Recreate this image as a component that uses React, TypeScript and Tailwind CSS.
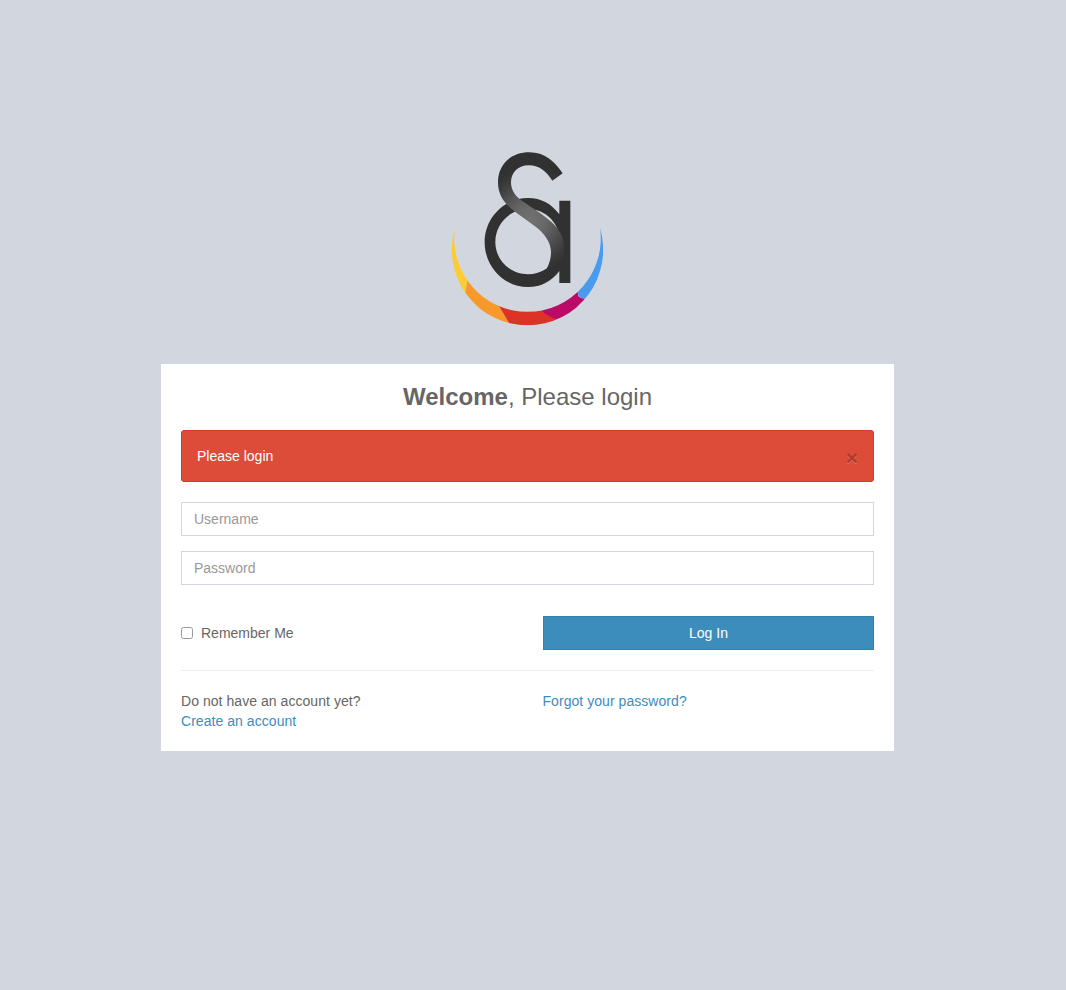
function Logo() {
  return (
    <svg width="180" height="200" viewBox="0 0 540 600" role="img" aria-label="Logo">
      <defs>
        <radialGradient id="sheen" gradientUnits="userSpaceOnUse" cx="272" cy="238" r="158">
          <stop offset="0" stopColor="#717171" />
          <stop offset="0.3" stopColor="#676767" />
          <stop offset="0.6" stopColor="#4e4e4e" />
          <stop offset="0.82" stopColor="#3b3b3b" />
          <stop offset="1" stopColor="#313131" />
        </radialGradient>
        <clipPath id="crescent">
          <path d="M45 264 A227 227 0 1 0 480 264 A219.8 219.8 0 1 1 45 264 Z" />
        </clipPath>
      </defs>
      <g clipPath="url(#crescent)">
        <path d="M0 200H120L83 421L76 457L0 520Z" fill="#fbcc34" />
        <path d="M83 419L76 457L40 600H230L207 549L177 498L150 440Z" fill="#f79a2b" />
        <path d="M177 498L207 549L230 600H400L350 538L303 512L250 480Z" fill="#dd3226" />
        <path d="M303 512Q330 532 350 538L400 600L470 500L435 476L424 474L415 469L413 455L350 470Z" fill="#bb0b67" />
        <path d="M413 455L415 466Q421 476 435 476L540 500V200H440Z" fill="#4a9bef" />
      </g>
      <path
        fillRule="evenodd"
        fill="#313131"
        d="M264 174C304 174 335 192 358 223V182H391V429H358V393C335 424 304 441 264 441C192 441 134 380 134 307C134 234 192 174 264 174ZM264 207C210 207 166 251 166 306C166 360 210 403 264 403C318 403 360 360 360 306C360 251 318 207 264 207Z"
      />
      <path
        fill="url(#sheen)"
        d="M368 100L337 122C320 96 300 76 266 76C235 76 213 98 213 127C213 150 226 170 247 183C280 206 302 219 326 239C344 253 352 264 361 278C378 310 374 345 358 378L320 387C330 367 333 352 333 336C333 308 314 280 284 258L223 214C193 191 174 165 174 127C174 73 213 37 268 37C315 37 342 63 368 100Z"
      />
    </svg>
  );
}

const field =
  "block h-[34px] w-full border border-[#d2d6de] bg-white px-3 text-sm text-[#555] outline-none placeholder:text-[#999]";

export default function App() {
  return (
    <div className="min-h-[990px] bg-[#d2d6de] pr-[11px] pt-[140px] font-['Liberation_Sans',Arial,sans-serif] text-sm text-[#666]">
      <main className="mx-auto w-[733px]">
        <div className="flex h-[224px] justify-center pl-[5px]">
          <Logo />
        </div>
        <form className="h-[387px] bg-white px-5 pt-5" onSubmit={(e) => e.preventDefault()}>
          <h1 className="mb-[20px] text-center text-2xl leading-[26px]">
            <b>Welcome</b>, Please login
          </h1>
          <div className="mb-5 flex h-[52px] items-center justify-between rounded-[3px] border border-[#d73925] bg-[#dd4b39] px-[15px] text-white">
            <span>Please login</span>
            <button
              type="button"
              aria-label="Close"
              className="mt-[3px] text-[21px] leading-none font-bold text-black opacity-20 [text-shadow:0_1px_0_#fff]"
            >
              ×
            </button>
          </div>
          <input className={field} placeholder="Username" />
          <input className={`${field} mt-[15px]`} type="password" placeholder="Password" />
          <div className="mt-[31px] grid grid-cols-[331px_331px] items-center gap-[31px]">
            <label className="flex items-center gap-2">
              <input
                type="checkbox"
                className="size-3 appearance-none rounded-[2.5px] border border-[#999] bg-white"
              />
              Remember Me
            </label>
            <button type="submit" className="h-[34px] border border-[#367fa9] bg-[#3c8dbc] text-white">
              Log In
            </button>
          </div>
          <hr className="my-5 border-[#eee]" />
          <div className="grid grid-cols-[331px_331px] gap-[31px] leading-5 tracking-[0.05px]">
            <div>
              Do not have an account yet?
              <br />
              <a href="#" className="text-[#3c8dbc]">Create an account</a>
            </div>
            <a href="#" className="-ml-[0.5px] text-[#3c8dbc]">Forgot your password?</a>
          </div>
        </form>
      </main>
    </div>
  );
}
